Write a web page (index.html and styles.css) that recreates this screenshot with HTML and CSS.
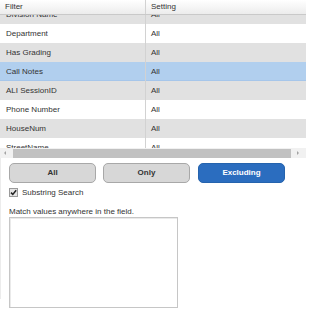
FILE: index.html
```html
<!DOCTYPE html>
<html>
<head>
<meta charset="utf-8">
<link rel="stylesheet" href="styles.css">
</head>
<body>
<div class="grid">
  <div class="head">
    <div class="cell c1">Filter</div>
    <div class="cell c2">Setting</div>
  </div>
  <div class="body">
    <div class="rows">
      <div class="row odd"><div class="cell c1">Division Name</div><div class="cell c2">All</div></div>
      <div class="row"><div class="cell c1">Department</div><div class="cell c2">All</div></div>
      <div class="row odd"><div class="cell c1">Has Grading</div><div class="cell c2">All</div></div>
      <div class="row sel"><div class="cell c1">Call Notes</div><div class="cell c2">All</div></div>
      <div class="row odd"><div class="cell c1">ALI SessionID</div><div class="cell c2">All</div></div>
      <div class="row"><div class="cell c1">Phone Number</div><div class="cell c2">All</div></div>
      <div class="row odd"><div class="cell c1">HouseNum</div><div class="cell c2">All</div></div>
      <div class="row"><div class="cell c1">StreetName</div><div class="cell c2">All</div></div>
    </div>
  </div>
  <div class="hscroll">
    <div class="arrow left"></div>
    <div class="thumb"></div>
    <div class="arrow right"></div>
  </div>
</div>
<div class="controls">
  <div class="buttons">
    <div class="btn">All</div>
    <div class="btn">Only</div>
    <div class="btn primary">Excluding</div>
  </div>
  <div class="check">
    <svg class="box" width="9" height="9" viewBox="0 0 9 9"><rect x="0.5" y="0.5" width="8" height="8" fill="#e4e4e4" stroke="#9a9a9a"/><path d="M2 4.6 L3.8 6.4 L7.2 2.2" fill="none" stroke="#222" stroke-width="1.5"/></svg>
    <span>Substring Search</span>
  </div>
  <div class="hint">Match values anywhere in the field.</div>
  <div class="area"></div>
</div>
</body>
</html>
```
FILE: styles.css
```css
html, body {
  margin: 0;
  padding: 0;
  background: #fff;
}
body {
  font-family: "Liberation Sans", Arial, sans-serif;
  font-size: 8px;
  color: #333;
  width: 306px;
  height: 309px;
  overflow: hidden;
}
.grid {
  width: 306px;
}
.head {
  display: grid;
  grid-template-columns: 146px 1fr;
  height: 14px;
  line-height: 14px;
  border-bottom: 1px solid #c9c9c9;
  background: linear-gradient(#ffffff, #ececec);
  color: #333;
}
.cell {
  white-space: nowrap;
  overflow: hidden;
}
.c1 {
  padding-left: 5px;
  border-right: 1px solid #d2d2d2;
}
.c2 {
  padding-left: 5px;
}
.row .c1 {
  padding-left: 6px;
}
.body {
  height: 133px;
  overflow: hidden;
}
.rows {
  margin-top: -10px;
}
.row {
  display: grid;
  grid-template-columns: 146px 1fr;
  height: 19px;
  line-height: 19px;
  background: #fff;
}
.row.odd {
  background: #e1e1e1;
}
.row.sel {
  background: #b1cfee;
  box-shadow: inset 0 -1px 0 #a6c6ea;
}
.hscroll {
  display: flex;
  align-items: center;
  height: 10px;
  background: #f1f1f1;
}
.thumb {
  flex: 1;
  height: 9px;
  background: #c1c1c1;
}
.arrow {
  width: 13px;
  height: 10px;
  position: relative;
}
.arrow.right {
  width: 15px;
}
.arrow::after {
  content: "";
  position: absolute;
  top: 3px;
  width: 0;
  height: 0;
  border-top: 2px solid transparent;
  border-bottom: 2px solid transparent;
}
.arrow.left::after {
  left: 4px;
  border-right: 2px solid #a3a3a3;
}
.arrow.right::after {
  left: 6px;
  border-left: 2px solid #a3a3a3;
}
.controls {
  padding: 5px 0 0 8px;
  border-left: 1px solid #ececec;
  margin-top: 0;
  height: 141px;
  box-sizing: border-box;
}
.buttons {
  display: flex;
  gap: 7px;
}
.btn {
  width: 85px;
  height: 18px;
  line-height: 18px;
  text-align: center;
  font-weight: bold;
  border: 1px solid #a8a8a8;
  border-radius: 5px;
  background: #d7d7d7;
  color: #333;
}
.btn.primary {
  background: #2b6dbf;
  border-color: #2563ad;
  color: #fff;
  margin-left: 1px;
}
.check {
  display: flex;
  align-items: center;
  gap: 4px;
  margin-top: 4px;
  height: 11px;
}
.box {
  display: block;
}
.hint {
  margin-top: 9px;
  height: 10px;
  line-height: 10px;
}
.area {
  width: 167px;
  height: 89px;
  border: 1px solid #c6c6c6;
  box-shadow: inset 1px 1px 0 #eaeaea;
  background: #fff;
}
```
